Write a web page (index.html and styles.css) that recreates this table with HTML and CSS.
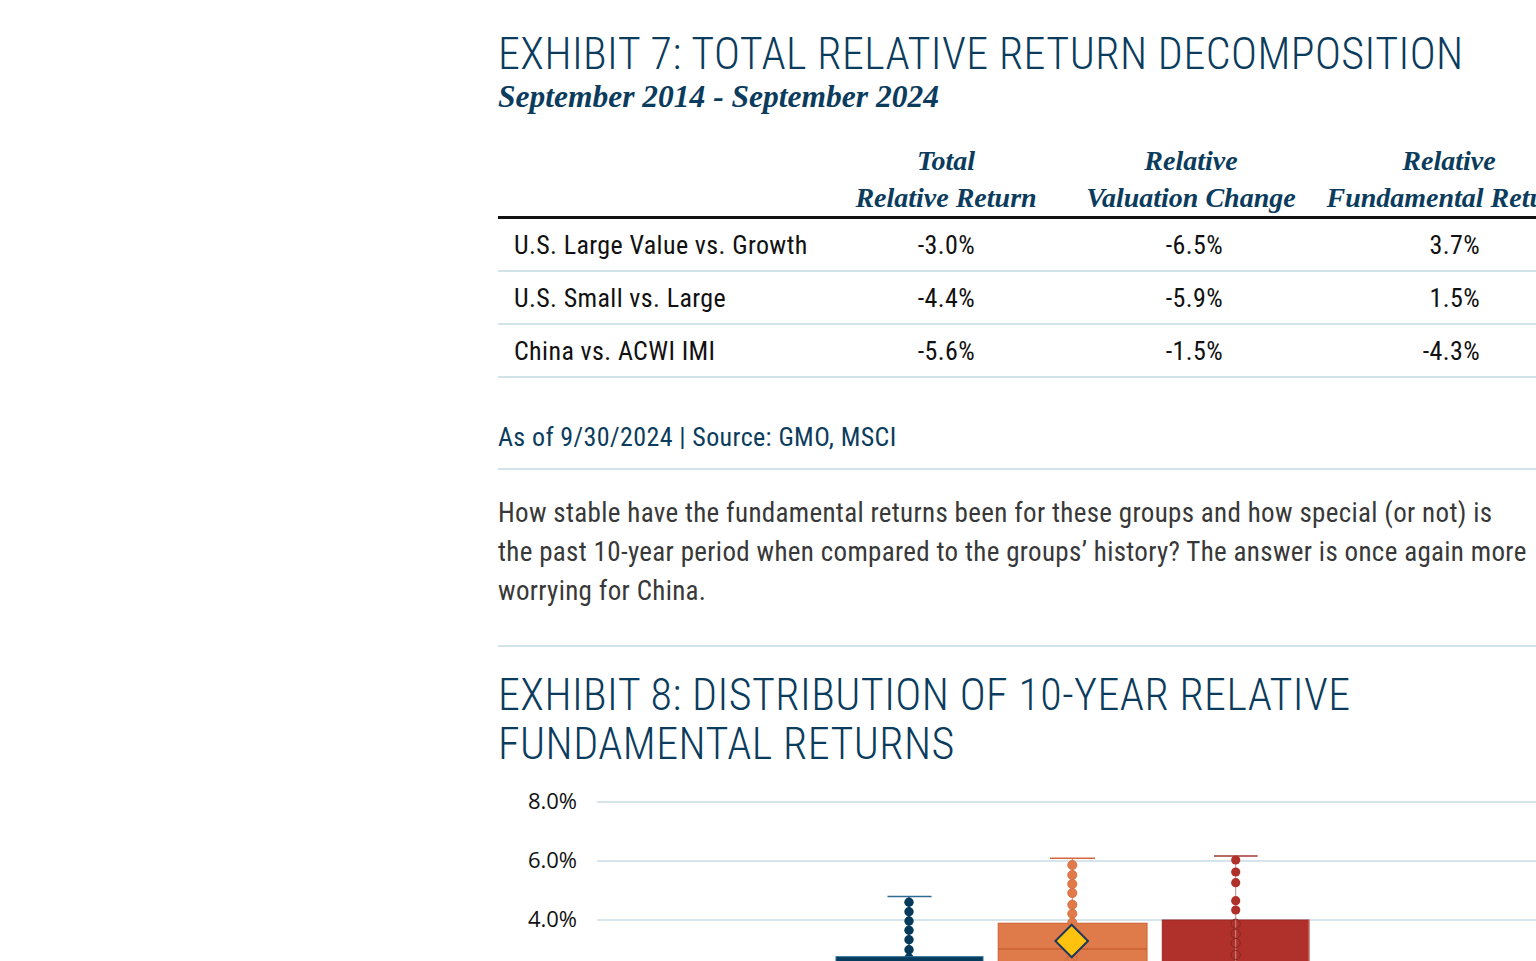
FILE: index.html
```html
<!DOCTYPE html>
<html lang="en">
<head>
<meta charset="utf-8">
<title>Exhibit 7 and 8</title>
<link rel="stylesheet" href="styles.css">
</head>
<body>
<main class="page">
  <h2 class="title">EXHIBIT 7: TOTAL RELATIVE RETURN DECOMPOSITION</h2>
  <p class="subtitle">September 2014 - September 2024</p>
  <table class="decomp">
    <colgroup>
      <col class="c-label"><col class="c-1"><col class="c-2"><col class="c-3">
    </colgroup>
    <thead>
      <tr>
        <th></th>
        <th>Total<br>Relative Return</th>
        <th>Relative<br>Valuation Change</th>
        <th>Relative<br>Fundamental Return</th>
      </tr>
    </thead>
    <tbody>
      <tr><td>U.S. Large Value vs. Growth</td><td class="v1">-3.0%</td><td class="v2">-6.5%</td><td class="v3">3.7%</td></tr>
      <tr><td>U.S. Small vs. Large</td><td class="v1">-4.4%</td><td class="v2">-5.9%</td><td class="v3">1.5%</td></tr>
      <tr><td>China vs. ACWI IMI</td><td class="v1">-5.6%</td><td class="v2">-1.5%</td><td class="v3">-4.3%</td></tr>
    </tbody>
  </table>
  <p class="source">As of 9/30/2024 | Source: GMO, MSCI</p>
  <p class="body-text">How stable have the fundamental returns been for these groups and how special (or not) is<br>the past 10-year period when compared to the groups’ history? The answer is once again more<br>worrying for China.</p>
  <h2 class="title title-8">EXHIBIT 8: DISTRIBUTION OF 10-YEAR RELATIVE<br>FUNDAMENTAL RETURNS</h2>
  <svg class="chart" width="1080" height="200" viewBox="0 0 1080 200" xmlns="http://www.w3.org/2000/svg">
    <g class="grid">
      <line x1="99" y1="22" x2="1080" y2="22"/>
      <line x1="99" y1="81" x2="1080" y2="81"/>
      <line x1="99" y1="140" x2="1080" y2="140"/>
    </g>
    <g class="axis">
      <text x="79" y="29">8.0%</text>
      <text x="79" y="88">6.0%</text>
      <text x="79" y="147">4.0%</text>
    </g>
    <!-- blue -->
    <line x1="411" y1="116.5" x2="411" y2="200" stroke="#0a3b5c" stroke-width="1.2"/>
    <line x1="389.5" y1="116.5" x2="433.5" y2="116.5" stroke="#2e6a92" stroke-width="1.5"/>
    <g fill="#063a5b">
      <circle cx="411" cy="122.3" r="4.7"/>
      <circle cx="411" cy="131.7" r="4.7"/>
      <circle cx="411" cy="141" r="4.7"/>
      <circle cx="411" cy="150.3" r="4.7"/>
      <circle cx="411" cy="159.7" r="4.7"/>
      <circle cx="411" cy="169.7" r="4.7"/>
      <circle cx="411" cy="178" r="4.7"/>
    </g>
    <rect x="338" y="176.7" width="147" height="40" fill="#063c5e" stroke="#2c6c93" stroke-width="1"/>
    <!-- orange -->
    <rect x="500.3" y="143.3" width="148.7" height="70" fill="#df7a4b" stroke="#d0693a" stroke-width="1.2"/>
    <line x1="500.3" y1="169" x2="649" y2="169" stroke="#c9612e" stroke-width="1.5"/>
    <line x1="574.3" y1="78.3" x2="574.3" y2="200" stroke="#d77a52" stroke-width="1"/>
    <line x1="552" y1="78.3" x2="597" y2="78.3" stroke="#d4693a" stroke-width="1.5"/>
    <g fill="#e07a4a" stroke="#d3693a" stroke-width="0.8">
      <circle cx="574.3" cy="85" r="4.6"/>
      <circle cx="574.3" cy="95" r="4.6"/>
      <circle cx="574.3" cy="104" r="4.6"/>
      <circle cx="574.3" cy="113" r="4.6"/>
      <circle cx="574.3" cy="124.7" r="4.6"/>
      <circle cx="574.3" cy="133.7" r="4.6"/>
      <circle cx="574.3" cy="142.7" r="4.6"/>
    </g>
    <g fill="none" stroke="#c9612e" stroke-width="0.8" opacity="0.7">
      <circle cx="574.3" cy="178" r="4.6"/>
      <circle cx="571.5" cy="181" r="4.6"/>
    </g>
    <path d="M573.7 144.7 L590 161 L573.7 177.3 L557.4 161 Z" fill="#ffc20f" stroke="#1e3a58" stroke-width="2"/>
    <!-- red -->
    <rect x="664.3" y="140" width="146.7" height="70" fill="#b0312b" stroke="#982723" stroke-width="1"/>
    <line x1="811" y1="140" x2="811" y2="200" stroke="#d98a86" stroke-width="1"/>
    <line x1="737.7" y1="76" x2="737.7" y2="200" stroke="#c48a88" stroke-width="1"/>
    <line x1="716" y1="76" x2="759.7" y2="76" stroke="#a33a36" stroke-width="1.5"/>
    <g fill="#b0302a">
      <circle cx="737.7" cy="80" r="4.6"/>
      <circle cx="737.7" cy="92" r="4.6"/>
      <circle cx="737.7" cy="102.7" r="4.6"/>
      <circle cx="737.7" cy="120.7" r="4.6"/>
      <circle cx="737.7" cy="130" r="4.6"/>
    </g>
    <g fill="none" stroke="#8a2420" stroke-width="1">
      <circle cx="737.7" cy="143.7" r="4.6"/>
      <circle cx="737.7" cy="153.7" r="4.6"/>
      <circle cx="737.7" cy="163" r="4.6"/>
      <circle cx="737.7" cy="175" r="4.6"/>
    </g>
  </svg>
</main>
</body>
</html>
```

FILE: styles.css
```css
html, body {
  margin: 0;
  padding: 0;
  background: #ffffff;
  overflow: hidden;
}

.page {
  width: 1080px;
  padding: 30px 0 0 498px;
  font-family: "Roboto Condensed", "Liberation Sans Narrow", Roboto, sans-serif;
}

.title {
  margin: 0;
  font-weight: 300;
  font-size: 44px;
  line-height: 49px;
  letter-spacing: 0.45px;
  color: #0b3c5d;
}

.subtitle {
  margin: 0;
  font-family: "Liberation Serif", serif;
  font-style: italic;
  font-weight: 700;
  font-size: 31.5px;
  line-height: 36px;
  color: #0b3c5d;
}

.decomp {
  margin-top: 27px;
  width: 1080px;
  table-layout: fixed;
  border-collapse: collapse;
}
.c-label { width: 332px; }
.c-1 { width: 232px; }
.c-2 { width: 258px; }
.c-3 { width: 258px; }

.decomp th {
  padding: 0;
  font-family: "Liberation Serif", serif;
  font-style: italic;
  font-weight: 700;
  font-size: 28px;
  line-height: 37px;
  color: #0b3c5d;
  text-align: center;
  white-space: nowrap;
  vertical-align: bottom;
  border-bottom: 3px solid #111;
}

.decomp td {
  padding: 2px 0 0;
  font-size: 26px;
  line-height: 49px;
  letter-spacing: 0.38px;
  color: #111;
  border-bottom: 2px solid #d3e3ec;
  vertical-align: top;
  white-space: nowrap;
}
.decomp td:first-child { padding-left: 16px; }
.decomp td.v1 { text-align: right; padding-right: 87px; }
.decomp td.v2 { text-align: right; padding-right: 97px; }
.decomp td.v3 { text-align: right; padding-right: 98px; }

.source {
  margin: 43px 0 0;
  padding-bottom: 15px;
  font-size: 26px;
  line-height: 32px;
  letter-spacing: 0.38px;
  color: #0b3c5d;
  border-bottom: 2px solid #d3e3ec;
}

.body-text {
  margin: 24px 0 0;
  padding-bottom: 34px;
  font-size: 27px;
  line-height: 39px;
  letter-spacing: 0.33px;
  color: #383838;
  white-space: nowrap;
  border-bottom: 2px solid #d3e3ec;
}

.title-8 {
  margin-top: 24px;
}

.chart {
  display: block;
  margin-top: 11px;
}
.grid line {
  stroke: #d6e4ec;
  stroke-width: 2;
}
.axis text {
  font-family: "Open Sans", sans-serif;
  font-size: 22px;
  fill: #111;
  text-anchor: end;
}
```
